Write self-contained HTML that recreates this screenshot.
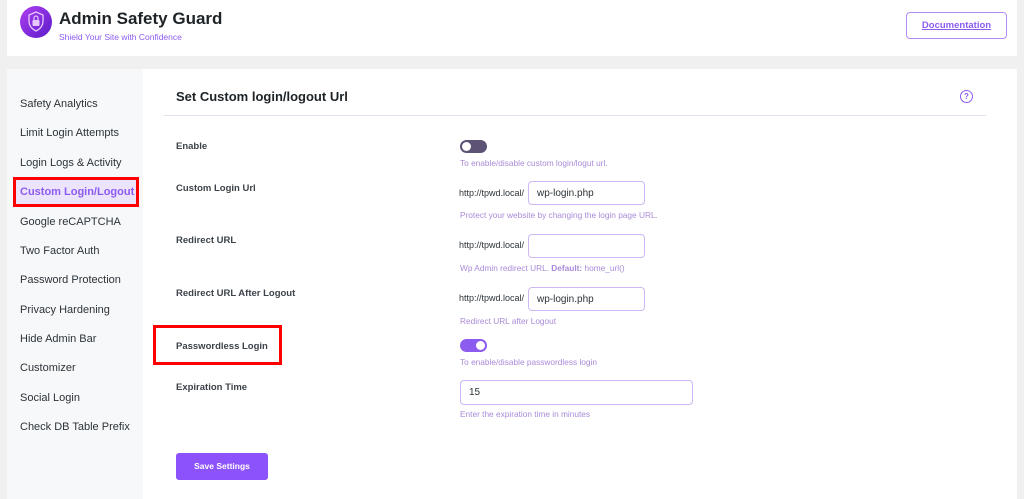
<!DOCTYPE html>
<html><head><meta charset="utf-8"><style>
*{box-sizing:border-box;margin:0;padding:0}
body{width:1024px;height:491px;background:#f0f0f1;font-family:"Liberation Sans",sans-serif;position:relative;overflow:hidden;color:#1d2327}
.a{position:absolute}
.hdr{left:7px;top:0;width:1010px;height:56px;background:#fff}
.main{left:7px;top:69px;width:1010px;height:430px;background:#fff}
.side{left:7px;top:69px;width:136px;height:430px;background:#f6f8fa}
.si{position:absolute;left:20px;font-size:11px;color:#2c3338}
.lbl{position:absolute;left:176px;font-size:9.5px;font-weight:bold;color:#3c434a}
.help{position:absolute;font-size:8.3px;color:#a98ad8}
.pre{position:absolute;left:459px;font-size:9px;color:#2c3338}
.inp{position:absolute;border:1px solid #cdb8f5;border-radius:4px;background:#fff;font-size:10px;padding-left:8px;display:flex;align-items:center;color:#2c3338}
.tg{position:absolute;left:460px;width:27px;height:13px;border-radius:7px}
.tg i{position:absolute;top:2px;width:9px;height:9px;border-radius:50%;background:#fff}
</style></head><body>
<div class="a hdr"></div>
<svg class="a" style="left:20px;top:6px" width="32" height="32" viewBox="0 0 32 32"><defs><linearGradient id="g" x1="0" y1="0" x2="1" y2="1"><stop offset="0" stop-color="#b03ff0"/><stop offset="1" stop-color="#5a1cc8"/></linearGradient></defs><circle cx="16" cy="16" r="16" fill="url(#g)"/><path d="M16 6l7 3v6c0 5-3 8-7 10-4-2-7-5-7-10V9z" fill="none" stroke="#e6c8ff" stroke-width="1.3"/><rect x="12.5" y="14" width="7" height="6" rx="1" fill="#e6c8ff"/><path d="M14 14v-2a2 2 0 014 0v2" fill="none" stroke="#e6c8ff" stroke-width="1.2"/></svg>
<div class="a" style="left:59px;top:9px;font-size:17px;font-weight:bold;color:#1d2327">Admin Safety Guard</div>
<div class="a" style="left:59px;top:32px;font-size:8.5px;color:#8c5cf0">Shield Your Site with Confidence</div>
<div class="a" style="left:906px;top:12px;width:101px;height:27px;border:1px solid #b58cf5;border-radius:4px;text-align:center;line-height:25px;font-size:9.5px;font-weight:bold;color:#8c5cf0;text-decoration:underline">Documentation</div>
<div class="a main"></div>
<div class="a side"></div>
<div class="si" style="top:98px">Safety Analytics</div>
<div class="si" style="top:127px">Limit Login Attempts</div>
<div class="si" style="top:157px">Login Logs &amp; Activity</div>
<div class="a" style="left:13px;top:177px;width:126px;height:30px;border:3px solid #f00;background:#ece3fc"></div>
<div class="si" style="top:186px;color:#8c5cf0;font-weight:bold">Custom Login/Logout</div>
<div class="si" style="top:216px">Google reCAPTCHA</div>
<div class="si" style="top:245px">Two Factor Auth</div>
<div class="si" style="top:274px">Password Protection</div>
<div class="si" style="top:304px">Privacy Hardening</div>
<div class="si" style="top:333px">Hide Admin Bar</div>
<div class="si" style="top:362px">Customizer</div>
<div class="si" style="top:392px">Social Login</div>
<div class="si" style="top:421px">Check DB Table Prefix</div>
<div class="a" style="left:176px;top:89px;font-size:13px;font-weight:bold;color:#1d2327">Set Custom login/logout Url</div>
<div class="a" style="left:960px;top:90px;width:13px;height:13px;border:1.3px solid #8c5cf0;border-radius:50%;font-size:8px;color:#8c5cf0;text-align:center;line-height:11px;font-weight:bold">?</div>
<div class="a" style="left:164px;top:115px;width:822px;height:1px;background:#e6e0f2"></div>
<div class="lbl" style="top:141px">Enable</div>
<div class="lbl" style="top:183px">Custom Login Url</div>
<div class="lbl" style="top:235px">Redirect URL</div>
<div class="lbl" style="top:288px">Redirect URL After Logout</div>
<div class="a" style="left:153px;top:325px;width:129px;height:40px;border:3px solid #f00"></div>
<div class="lbl" style="top:341px">Passwordless Login</div>
<div class="lbl" style="top:382px">Expiration Time</div>
<div class="tg" style="top:140px;background:#5c5375"><i style="left:2px"></i></div>
<div class="help" style="left:460px;top:158px">To enable/disable custom login/logut url.</div>
<div class="pre" style="top:188px">http://tpwd.local/</div>
<div class="inp" style="left:528px;top:181px;width:117px;height:24px">wp-login.php</div>
<div class="help" style="left:460px;top:210px">Protect your website by changing the login page URL.</div>
<div class="pre" style="top:240px">http://tpwd.local/</div>
<div class="inp" style="left:528px;top:234px;width:117px;height:24px"></div>
<div class="help" style="left:460px;top:263px">Wp Admin redirect URL. <b>Default:</b> home_url()</div>
<div class="pre" style="top:293px">http://tpwd.local/</div>
<div class="inp" style="left:528px;top:287px;width:117px;height:24px">wp-login.php</div>
<div class="help" style="left:460px;top:316px">Redirect URL after Logout</div>
<div class="tg" style="top:339px;background:#8c5cf0"><i style="left:16px"></i></div>
<div class="help" style="left:460px;top:357px">To enable/disable passwordless login</div>
<div class="inp" style="left:460px;top:380px;width:233px;height:25px">15</div>
<div class="help" style="left:460px;top:409px">Enter the expiration time in minutes</div>
<div class="a" style="left:176px;top:453px;width:92px;height:27px;background:#8c52fb;border-radius:3px;color:#fff;font-size:8.5px;font-weight:bold;text-align:center;line-height:27px">Save Settings</div>
</body></html>
